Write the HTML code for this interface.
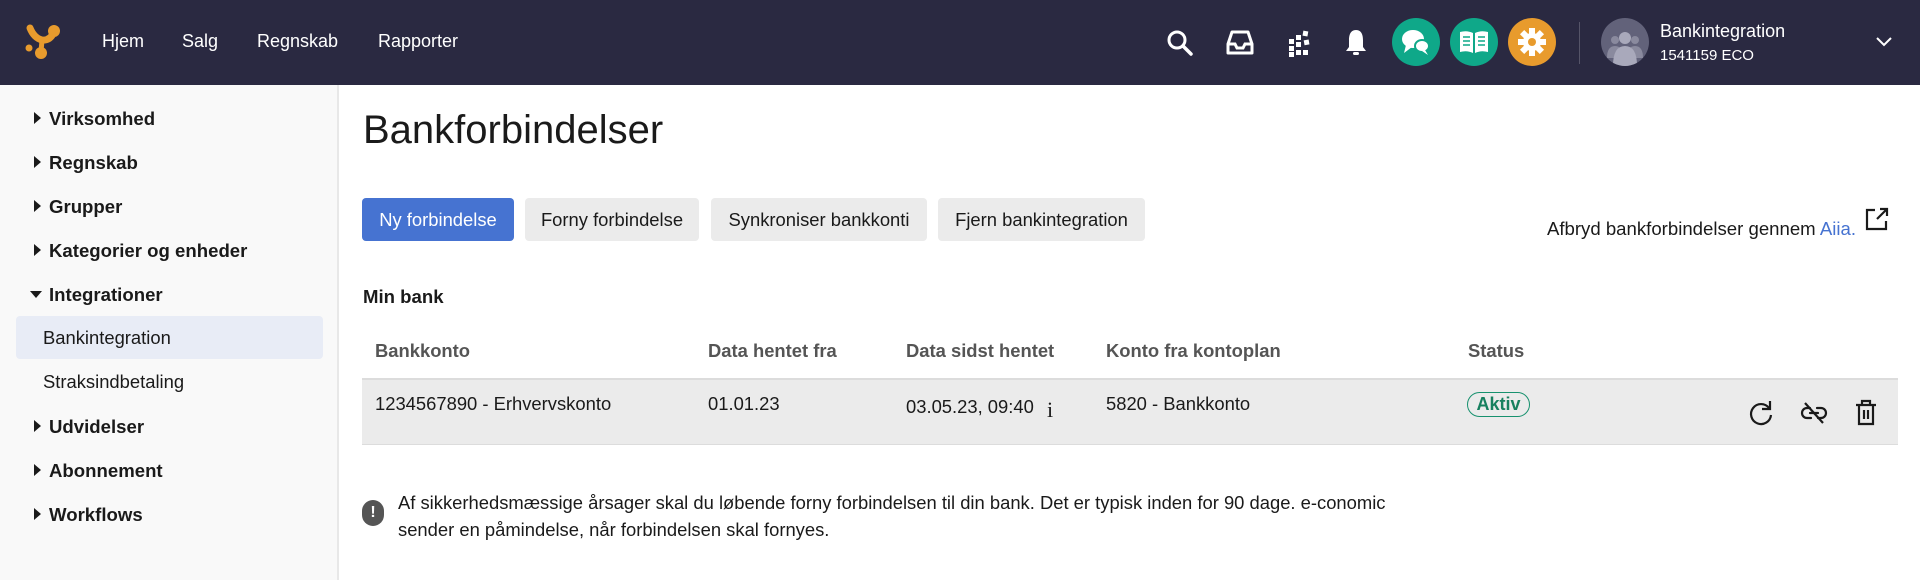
<!DOCTYPE html>
<html><head><meta charset="utf-8"><style>
*{box-sizing:border-box;margin:0;padding:0}
body{width:1920px;height:580px;overflow:hidden;font-family:"Liberation Sans",Arial,sans-serif;color:#1a1a1a;background:#fff;position:relative}
.hdr{position:absolute;left:0;top:0;width:1920px;height:85px;background:#2a2941}
.nav{position:absolute;top:31px;color:#fff;font-size:18px}
.ab{position:absolute}
.side{position:absolute;left:0;top:85px;width:339px;height:495px;background:#f9f9f9;border-right:2px solid #e8e8e8}
.si{position:absolute;left:49px;font-size:18.6px;font-weight:bold;color:#1a1a1a}
.tri{position:absolute;left:-15px;top:4px;width:0;height:0;border-top:6px solid transparent;border-bottom:6px solid transparent;border-left:7px solid #1a1a1a}
.tri.d{left:-19px;top:7px;border-left:6px solid transparent;border-right:6px solid transparent;border-top:7px solid #1a1a1a;border-bottom:0}
.sub{position:absolute;left:43px;font-size:18.4px;color:#1a1a1a}
.btn{position:absolute;top:198px;height:43px;border-radius:4px;background:#ebebeb;font-size:18.4px;line-height:43px;text-align:center;color:#1a1a1a}
.th{position:absolute;top:340px;font-size:18.4px;font-weight:bold;color:#555}
.td{position:absolute;top:393px;font-size:18.4px;color:#1a1a1a}
.circ{position:absolute;top:18px;width:48px;height:48px;border-radius:50%}
</style></head><body>
<div class="hdr">
<svg class="ab" style="left:24px;top:22px" width="40" height="40" viewBox="0 0 40 40"><path d="M6 6 Q10 16 18 18 Q26 19 30 10" stroke="#e89b2d" stroke-width="7" fill="none" stroke-linecap="round"/><circle cx="30" cy="9" r="6" fill="#e89b2d"/><circle cx="5" cy="26" r="3.5" fill="#e89b2d"/><circle cx="17" cy="31" r="6" fill="#e89b2d"/><path d="M18 18 L17 30" stroke="#e89b2d" stroke-width="5"/></svg>
<div class="nav" style="left:102px">Hjem</div>
<div class="nav" style="left:182px">Salg</div>
<div class="nav" style="left:257px">Regnskab</div>
<div class="nav" style="left:378px">Rapporter</div>
<svg class="ab" style="left:1166px;top:29px" width="28" height="28" viewBox="0 0 28 28"><circle cx="11" cy="11" r="8" stroke="#fff" stroke-width="3" fill="none"/><path d="M17 17 L25 25" stroke="#fff" stroke-width="3.5" stroke-linecap="round"/></svg>
<svg class="ab" style="left:1226px;top:30px" width="28" height="26" viewBox="0 0 28 26"><path d="M6 2 H22 L26 14 V23 H2 V14 Z" stroke="#fff" stroke-width="3" fill="none" stroke-linejoin="round"/><path d="M2 14 H9 L11 18 H17 L19 14 H26" stroke="#fff" stroke-width="3" fill="none"/></svg>
<svg class="ab" style="left:1287px;top:29px" width="26" height="28" viewBox="0 0 26 28"><g fill="#fff"><rect x="2" y="10" width="5" height="5"/><rect x="9" y="6" width="5" height="5"/><rect x="16" y="2" width="5" height="5" transform="rotate(10 18 4)"/><rect x="2" y="17" width="5" height="5"/><rect x="9" y="13" width="5" height="5"/><rect x="17" y="11" width="5" height="5" transform="rotate(-10 19 13)"/><rect x="2" y="23" width="5" height="5"/><rect x="9" y="21" width="5" height="5"/><rect x="16" y="21" width="5" height="5"/></g></svg>
<svg class="ab" style="left:1344px;top:28px" width="24" height="30" viewBox="0 0 24 30"><path d="M12 2 C6 2 5 8 5 12 V19 L2 23 H22 L19 19 V12 C19 8 18 2 12 2Z" fill="#fff"/><rect x="9" y="24" width="6" height="3" rx="1.5" fill="#fff"/></svg>
<div class="circ" style="left:1392px;background:#0fa889"><svg width="48" height="48" viewBox="0 0 48 48"><ellipse cx="21" cy="21" rx="11" ry="9" fill="#fff"/><path d="M14 27 L12 35 L20 29Z" fill="#fff"/><ellipse cx="30" cy="28" rx="7" ry="6" fill="#fff" stroke="#0fa889" stroke-width="2"/><path d="M33 32 L36 37 L30 33Z" fill="#fff"/></svg></div>
<div class="circ" style="left:1450px;background:#0fa889"><svg width="48" height="48" viewBox="0 0 48 48"><path d="M10 14 Q17 12 23 15 V35 Q17 32 10 34Z M25 15 Q31 12 38 14 V34 Q31 32 25 35Z" fill="#fff"/><g stroke="#0fa889" stroke-width="1.6"><path d="M13 19 H20 M13 23 H20 M13 27 H20 M28 19 H35 M28 23 H35 M28 27 H35"/></g></svg></div>
<div class="circ" style="left:1508px;background:#e89b2d"><svg width="48" height="48" viewBox="0 0 48 48"><g transform="translate(24 24)" fill="#fff"><circle r="9"/><g><rect x="-3" y="-14" width="6" height="28"/><rect x="-3" y="-14" width="6" height="28" transform="rotate(45)"/><rect x="-3" y="-14" width="6" height="28" transform="rotate(90)"/><rect x="-3" y="-14" width="6" height="28" transform="rotate(135)"/></g><circle r="4" fill="#e89b2d"/></g></svg></div>
<div class="ab" style="left:1579px;top:22px;width:1px;height:42px;background:#555468"></div>
<div class="circ" style="left:1601px;background:#62627a;overflow:hidden"><svg width="48" height="48" viewBox="0 0 48 48"><g fill="#8a8a9e"><circle cx="14" cy="22" r="4"/><circle cx="34" cy="22" r="4"/><path d="M6 40 Q6 28 14 28 Q22 28 22 40Z M26 40 Q26 28 34 28 Q42 28 42 40Z"/></g><g fill="#a9a9bb"><circle cx="24" cy="20" r="6"/><path d="M12 48 Q12 28 24 28 Q36 28 36 48Z"/></g></svg></div>
<div class="ab" style="left:1660px;top:21px;color:#fff;font-size:18px">Bankintegration</div>
<div class="ab" style="left:1660px;top:47px;color:#fff;font-size:15px">1541159 ECO</div>
<svg class="ab" style="left:1875px;top:36px" width="18" height="12" viewBox="0 0 18 12"><path d="M2 2 L9 9 L16 2" stroke="#fff" stroke-width="2" fill="none"/></svg>
</div>

<div class="side">
<div class="si" style="top:23px"><span class="tri"></span>Virksomhed</div>
<div class="si" style="top:67px"><span class="tri"></span>Regnskab</div>
<div class="si" style="top:111px"><span class="tri"></span>Grupper</div>
<div class="si" style="top:155px"><span class="tri"></span>Kategorier og enheder</div>
<div class="si" style="top:199px"><span class="tri d"></span>Integrationer</div>
<div class="ab" style="left:16px;top:231px;width:307px;height:43px;background:#e8ecf6;border-radius:4px"></div>
<div class="sub" style="top:242px">Bankintegration</div>
<div class="sub" style="top:286px">Straksindbetaling</div>
<div class="si" style="top:331px"><span class="tri"></span>Udvidelser</div>
<div class="si" style="top:375px"><span class="tri"></span>Abonnement</div>
<div class="si" style="top:419px"><span class="tri"></span>Workflows</div>
</div>

<div class="ab" style="left:363px;top:108px;font-size:40px;color:#1a1a1a">Bankforbindelser</div>
<div class="btn" style="left:362px;width:152px;background:#4673d1;color:#fff">Ny forbindelse</div>
<div class="btn" style="left:525px;width:174px">Forny forbindelse</div>
<div class="btn" style="left:711px;width:216px">Synkroniser bankkonti</div>
<div class="btn" style="left:938px;width:207px">Fjern bankintegration</div>
<div class="ab" style="right:64px;top:218px;font-size:18.6px;white-space:nowrap">Afbryd bankforbindelser gennem <span style="color:#4673d1">Aiia.</span></div>
<svg class="ab" style="left:1864px;top:206px" width="26" height="26" viewBox="0 0 26 26"><path d="M11 4 H3 V23 H22 V15" stroke="#1a1a1a" stroke-width="2.2" fill="none"/><path d="M13 13 L23 3 M16 3 H23 V10" stroke="#1a1a1a" stroke-width="2.2" fill="none"/></svg>
<div class="ab" style="left:363px;top:286px;font-size:18.6px;font-weight:bold">Min bank</div>

<div class="th" style="left:375px">Bankkonto</div>
<div class="th" style="left:708px">Data hentet fra</div>
<div class="th" style="left:906px">Data sidst hentet</div>
<div class="th" style="left:1106px">Konto fra kontoplan</div>
<div class="th" style="left:1468px">Status</div>
<div class="ab" style="left:362px;top:378px;width:1536px;height:67px;background:#ebebeb;border-top:2px solid #dcdcdc;border-bottom:1px solid #dcdcdc"></div>
<div class="td" style="left:375px">1234567890 - Erhvervskonto</div>
<div class="td" style="left:708px">01.01.23</div>
<div class="td" style="left:906px">03.05.23, 09:40 <span style="font-family:'Liberation Serif',serif;font-size:22px;margin-left:8px;position:relative;top:4px">i</span></div>
<div class="td" style="left:1106px">5820 - Bankkonto</div>
<div class="ab" style="left:1467px;top:392px;width:63px;height:25px;border:1.5px solid #17916e;border-radius:13px;color:#17805f;font-weight:bold;font-size:18px;text-align:center;line-height:22px">Aktiv</div>
<svg class="ab" style="left:1748px;top:399px" width="26" height="28" viewBox="0 0 26 28"><path d="M21 9 A10 10 0 1 0 23 16" stroke="#1a1a1a" stroke-width="2.2" fill="none"/><path d="M22 2 V10 H14" stroke="#1a1a1a" stroke-width="2.2" fill="none"/></svg>
<svg class="ab" style="left:1800px;top:401px" width="28" height="24" viewBox="0 0 28 24"><path d="M10 7 H7 A5 5 0 0 0 7 17 H11 M17 7 H21 A5 5 0 0 1 21 17 H18 M10 12 H18" stroke="#1a1a1a" stroke-width="2.2" fill="none" stroke-linecap="round"/><path d="M5 2 L23 22" stroke="#1a1a1a" stroke-width="2.2"/></svg>
<svg class="ab" style="left:1854px;top:399px" width="24" height="28" viewBox="0 0 24 28"><path d="M2 6 H22 M8 6 V2 H16 V6 M5 6 V25 H19 V6 M10 11 V20 M14 11 V20" stroke="#1a1a1a" stroke-width="2.2" fill="none"/></svg>

<div class="ab" style="left:362px;top:500px;width:22px;height:26px;background:#555;border-radius:11px;color:#fff;font-weight:bold;font-size:16px;text-align:center;line-height:26px">!</div>
<div class="ab" style="left:398px;top:489px;font-size:18.4px;line-height:27px;width:1120px;white-space:nowrap">Af sikkerhedsmæssige årsager skal du løbende forny forbindelsen til din bank. Det er typisk inden for 90 dage. e-conomic<br>sender en påmindelse, når forbindelsen skal fornyes.</div>
</body></html>
